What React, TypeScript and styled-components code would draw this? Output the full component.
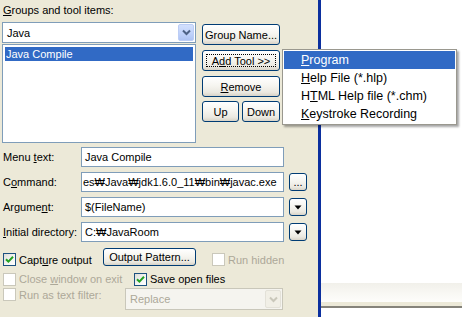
import React from 'react';
import styled, { createGlobalStyle, css } from 'styled-components';

const GlobalStyle = createGlobalStyle`
  html, body {
    margin: 0;
    padding: 0;
    background: #ffffff;
  }
  body {
    font-family: 'Liberation Sans', Arial, sans-serif;
    font-size: 11px;
    color: #000;
  }
  * {
    box-sizing: border-box;
  }
`;

const Window = styled.div`
  position: relative;
  display: flex;
  width: 462px;
  height: 317px;
  overflow: hidden;
`;

const LeftPane = styled.div`
  flex: none;
  width: 318px;
  padding-left: 2px;
  display: flex;
  flex-direction: column;
  background: #ece9d8;
`;

const BlueRule = styled.div`
  flex: none;
  width: 3px;
  background: #0b2f9e;
`;

const RightPane = styled.div`
  flex: 1;
  display: flex;
  flex-direction: column;
  background: #ffffff;
`;

const Blank = styled.div`
  flex: 1;
`;

const StatusStrip = styled.div`
  height: 19px;
  background: linear-gradient(180deg, #f1f0ea 0%, #f8f7f3 50%, #fdfdfb 100%);
`;

const StatusBase = styled.div`
  height: 6px;
  background: #ece9d8;
  border-bottom: 2px solid #85837a;
  margin-bottom: 9px;
`;

const GroupLabel = styled.div`
  height: 22px;
  padding: 4px 0 0 1px;
  line-height: 13px;
`;

const TopRow = styled.div`
  display: flex;
  gap: 6px;
`;

const ListColumn = styled.div`
  width: 194px;
  display: flex;
  flex-direction: column;
  gap: 1px;
`;

const ComboBox = styled.div<{ $disabled?: boolean; $width?: number; $height?: number }>`
  display: flex;
  align-items: stretch;
  width: ${(p) => (p.$width ? `${p.$width}px` : '100%')};
  height: ${(p) => p.$height ?? 21}px;
  padding: 1px;
  border: 1px solid ${(p) => (p.$disabled ? '#c9c7ba' : '#7f9db9')};
  background: ${(p) => (p.$disabled ? '#f5f4ef' : '#ffffff')};
  color: ${(p) => (p.$disabled ? '#aca899' : '#000')};
`;

const ComboText = styled.div`
  flex: 1;
  display: flex;
  align-items: center;
  padding-left: 3px;
`;

const DropButton = styled.div<{ $disabled?: boolean }>`
  flex: none;
  width: 16px;
  display: flex;
  align-items: center;
  justify-content: center;
  border-radius: 2px;
  ${(p) =>
    p.$disabled
      ? css`
          background: #f1efe6;
          border: 1px solid #e3e1d8;
        `
      : css`
          background: linear-gradient(180deg, #d3e0fd 0%, #bfd1fa 60%, #aec3f3 100%);
          border: 1px solid #bccdf5;
        `}
`;

const ListBox = styled.div`
  height: 99px;
  padding: 2px;
  border: 1px solid #7f9db9;
  background: #ffffff;
`;

const ListItem = styled.div<{ $selected?: boolean }>`
  height: 14px;
  line-height: 14px;
  padding-left: 1px;
  background: ${(p) => (p.$selected ? '#316ac5' : 'transparent')};
  color: ${(p) => (p.$selected ? '#ffffff' : '#000')};
`;

const ButtonColumn = styled.div`
  width: 78px;
  padding-top: 2px;
  display: flex;
  flex-direction: column;
`;

const PushButton = styled.div<{ $w?: number; $h?: number; $gapTop?: number; $focused?: boolean }>`
  position: relative;
  flex: none;
  width: ${(p) => (p.$w ? `${p.$w}px` : '100%')};
  height: ${(p) => p.$h ?? 21}px;
  margin-top: ${(p) => p.$gapTop ?? 0}px;
  display: flex;
  align-items: center;
  justify-content: center;
  border: 1px solid #003c74;
  border-radius: 3px;
  background: linear-gradient(180deg, #ffffff 0%, #f6f5f0 45%, #ebe9e1 80%, #d8d3c7 100%);
  white-space: nowrap;
  ${(p) =>
    p.$focused &&
    css`
      &::after {
        content: '';
        position: absolute;
        inset: 3px;
        border: 1px dotted #000;
      }
    `}
`;

const ButtonPair = styled.div`
  display: flex;
  gap: 3px;
  margin-top: 4px;
`;

const Form = styled.div`
  display: flex;
  flex-direction: column;
  gap: 5px;
  margin-top: 4px;
`;

const FieldRow = styled.div`
  display: flex;
  align-items: center;
  height: 20px;
`;

const FieldLabel = styled.div`
  flex: none;
  width: 79px;
  padding-left: 1px;
`;

const TextBox = styled.div<{ $tight?: boolean }>`
  flex: none;
  width: 203px;
  height: 20px;
  display: flex;
  align-items: center;
  padding: 0 3px 0 ${(p) => (p.$tight ? 1 : 3)}px;
  border: 1px solid #7f9db9;
  background: #ffffff;
  white-space: nowrap;
  overflow: hidden;
`;

const SideSlot = styled.div`
  margin-left: 5px;
`;

const Options = styled.div`
  display: flex;
  flex-direction: column;
  margin-top: 5px;
  padding-left: 1px;
`;

const OptionRow = styled.div<{ $h: number; $align?: string; $gapTop?: number }>`
  display: flex;
  align-items: ${(p) => p.$align ?? 'center'};
  height: ${(p) => p.$h}px;
  margin-top: ${(p) => p.$gapTop ?? 0}px;
`;

const CheckItem = styled.div<{ $w?: number; $disabled?: boolean }>`
  flex: none;
  width: ${(p) => (p.$w ? `${p.$w}px` : 'auto')};
  display: flex;
  align-items: center;
  gap: 3px;
  color: ${(p) => (p.$disabled ? '#aca899' : '#000')};
  white-space: nowrap;
`;

const CheckBox = styled.div<{ $disabled?: boolean }>`
  flex: none;
  width: 13px;
  height: 13px;
  display: flex;
  align-items: center;
  justify-content: center;
  border: 1px solid ${(p) => (p.$disabled ? '#cac8bb' : '#1c5180')};
  background: ${(p) =>
    p.$disabled ? '#ffffff' : 'linear-gradient(135deg, #dcdcd7 0%, #f3f3f1 50%, #ffffff 100%)'};
`;

const Spacer = styled.div<{ $w: number }>`
  flex: none;
  width: ${(p) => p.$w}px;
`;

const PopupMenu = styled.div`
  position: absolute;
  left: 282px;
  top: 49px;
  width: 175px;
  padding: 1px;
  border: 1px solid #9a988f;
  background: #ffffff;
  box-shadow: 2px 2px 2px rgba(0, 0, 0, 0.35);
  font-size: 12.5px;
`;

const MenuItem = styled.div<{ $active?: boolean }>`
  height: 18px;
  display: flex;
  align-items: center;
  padding-left: 17px;
  background: ${(p) => (p.$active ? '#316ac5' : 'transparent')};
  color: ${(p) => (p.$active ? '#ffffff' : '#000')};
`;

const Chevron = ({ color }: { color: string }) => (
  <svg width="9" height="7" viewBox="0 0 9 7">
    <path d="M1 1.5 L4.5 5 L8 1.5" fill="none" stroke={color} strokeWidth="2" />
  </svg>
);

const DownTriangle = () => (
  <svg width="8" height="5" viewBox="0 0 8 5">
    <path d="M0.5 0.5 H7.5 L4 4.5 Z" fill="#000" />
  </svg>
);

const Check = () => (
  <svg width="9" height="9" viewBox="0 0 9 9">
    <path d="M1 4.2 L3.4 6.6 L8 1.8" fill="none" stroke="#21a121" strokeWidth="2" />
  </svg>
);

interface IOption {
  label: React.ReactNode;
  checked?: boolean;
  disabled?: boolean;
  width?: number;
}

const Option: React.FC<IOption> = ({ label, checked, disabled, width }) => (
  <CheckItem $w={width} $disabled={disabled}>
    <CheckBox $disabled={disabled}>{checked && <Check />}</CheckBox>
    <span>{label}</span>
  </CheckItem>
);

const App: React.FC = () => {
  return (
    <>
      <GlobalStyle />
      <Window>
        <LeftPane>
          <GroupLabel>
            <u>G</u>roups and tool items:
          </GroupLabel>
          <TopRow>
            <ListColumn>
              <ComboBox>
                <ComboText>Java</ComboText>
                <DropButton>
                  <Chevron color="#4d6185" />
                </DropButton>
              </ComboBox>
              <ListBox>
                <ListItem $selected>Java Compile</ListItem>
              </ListBox>
            </ListColumn>
            <ButtonColumn>
              <PushButton>Group Name...</PushButton>
              <PushButton $gapTop={5} $focused>
                A<u>d</u>d Tool &gt;&gt;
              </PushButton>
              <PushButton $gapTop={5}>
                <u>R</u>emove
              </PushButton>
              <ButtonPair>
                <PushButton $w={37}>Up</PushButton>
                <PushButton $w={38}>Down</PushButton>
              </ButtonPair>
            </ButtonColumn>
          </TopRow>

          <Form>
            <FieldRow>
              <FieldLabel>
                Menu <u>t</u>ext:
              </FieldLabel>
              <TextBox>Java Compile</TextBox>
            </FieldRow>
            <FieldRow>
              <FieldLabel>
                C<u>o</u>mmand:
              </FieldLabel>
              <TextBox $tight>es₩Java₩jdk1.6.0_11₩bin₩javac.exe</TextBox>
              <SideSlot>
                <PushButton $w={18} $h={18}>
                  ...
                </PushButton>
              </SideSlot>
            </FieldRow>
            <FieldRow>
              <FieldLabel>
                Argume<u>n</u>t:
              </FieldLabel>
              <TextBox>$(FileName)</TextBox>
              <SideSlot>
                <PushButton $w={18} $h={18}>
                  <DownTriangle />
                </PushButton>
              </SideSlot>
            </FieldRow>
            <FieldRow>
              <FieldLabel>
                <u>I</u>nitial directory:
              </FieldLabel>
              <TextBox>C:₩JavaRoom</TextBox>
              <SideSlot>
                <PushButton $w={18} $h={18}>
                  <DownTriangle />
                </PushButton>
              </SideSlot>
            </FieldRow>
          </Form>

          <Options>
            <OptionRow $h={19} $align="flex-end">
              <Option
                width={100}
                checked
                label={
                  <>
                    Capt<u>u</u>re output
                  </>
                }
              />
              <PushButton $w={93} $h={18}>
                Output Pattern...
              </PushButton>
              <Spacer $w={16} />
              <Option disabled label="Run hidden" />
            </OptionRow>
            <OptionRow $h={14} $gapTop={6}>
              <Option
                width={131}
                disabled
                label={
                  <>
                    Close <u>w</u>indow on exit
                  </>
                }
              />
              <Option checked label="Save open files" />
            </OptionRow>
            <OptionRow $h={22} $align="flex-start" $gapTop={2}>
              <Option width={122} disabled label="Run as text filter:" />
              <ComboBox $disabled $width={158} $height={22}>
                <ComboText>Replace</ComboText>
                <DropButton $disabled>
                  <Chevron color="#c9c7ba" />
                </DropButton>
              </ComboBox>
            </OptionRow>
          </Options>
        </LeftPane>
        <BlueRule />
        <RightPane>
          <Blank />
          <StatusStrip />
          <StatusBase />
        </RightPane>

        <PopupMenu>
          <MenuItem $active>
            <u>P</u>rogram
          </MenuItem>
          <MenuItem>
            <u>H</u>elp File (*.hlp)
          </MenuItem>
          <MenuItem>
            H<u>T</u>ML Help file (*.chm)
          </MenuItem>
          <MenuItem>
            <u>K</u>eystroke Recording
          </MenuItem>
        </PopupMenu>
      </Window>
    </>
  );
};

export default App;
